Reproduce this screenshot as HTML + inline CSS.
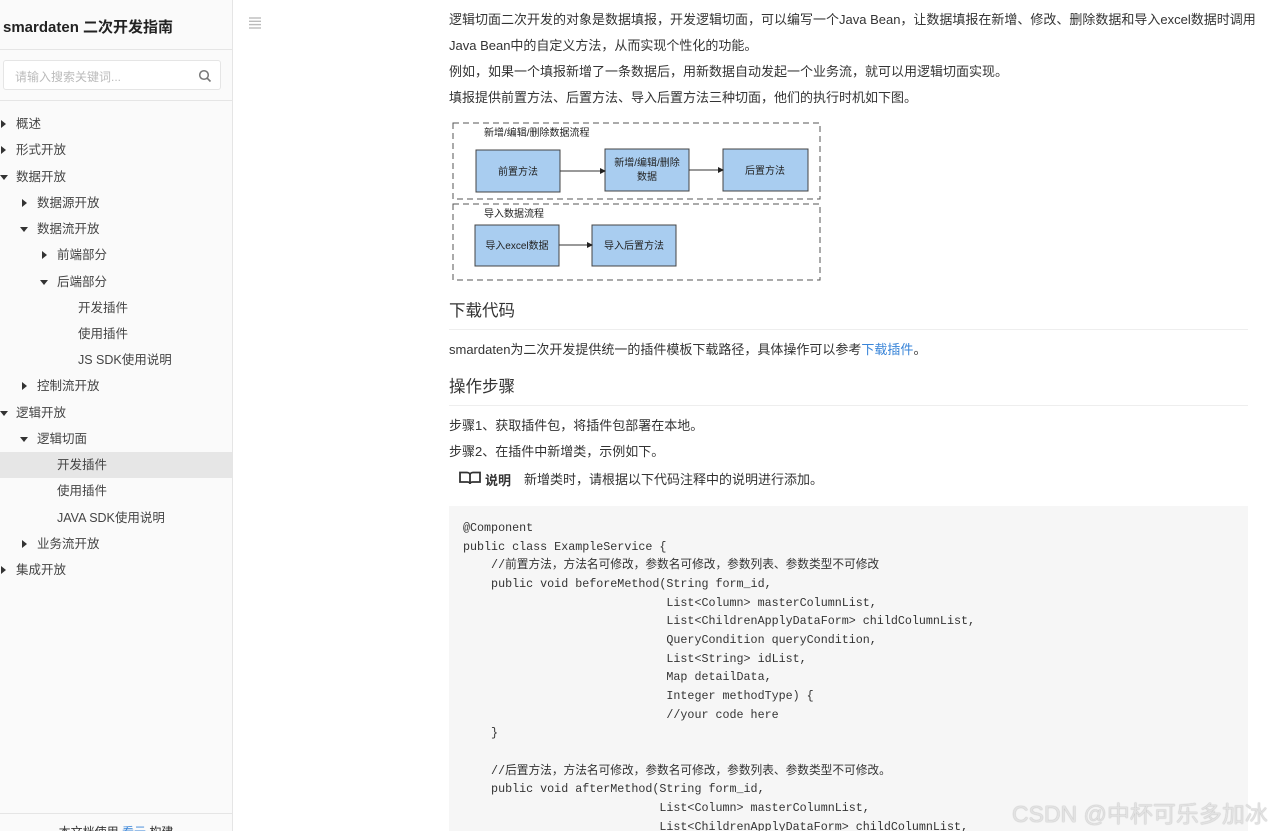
<!DOCTYPE html>
<html><head><meta charset="utf-8"><style>
*{margin:0;padding:0;box-sizing:border-box}
html,body{width:1280px;height:831px;overflow:hidden}
body{background:#fff;font-family:"Liberation Sans","Noto Sans CJK SC",sans-serif;color:#333;position:relative}
.side{position:absolute;left:0;top:0;width:233px;height:831px;background:#fafafa;border-right:1px solid #e5e5e5}
.title{position:absolute;left:3px;top:16px;font-size:15px;font-weight:bold;color:#222}
.hr1{position:absolute;left:0;top:49px;width:232px;border-top:1px solid #e5e5e5}
.search{position:absolute;left:3px;top:60px;width:218px;height:30px;border:1px solid #e5e5e5;border-radius:3px;background:#fff}
.search span{position:absolute;left:11px;top:7px;font-size:12px;color:#bbb}
.search svg{position:absolute;right:8px;top:8px}
.hr2{position:absolute;left:0;top:100px;width:232px;border-top:1px solid #e5e5e5}
.nav div{position:absolute;height:26px;line-height:26px;font-size:12.5px;color:#444;left:0;width:232px}
.nav .act{background:#e6e6e6}
.tri{position:absolute;top:10px;width:0;height:0}
.tr{border-top:4px solid transparent;border-bottom:4px solid transparent;border-left:5px solid #333;top:9px}
.td{border-left:4px solid transparent;border-right:4px solid transparent;border-top:5px solid #333;top:11px}
.foot{position:absolute;left:0;top:813px;width:232px;border-top:1px solid #e5e5e5;font-size:12px;text-align:center;padding-top:9px;color:#333}
.menu{position:absolute;left:249px;top:17px}
.c{position:absolute;left:449px;font-size:13px;color:#333;white-space:nowrap}
h2{position:absolute;left:449px;width:799px;font-size:16.5px;font-weight:normal;color:#333;border-bottom:1px solid #eee;padding-bottom:8px}
a{color:#3884d8;text-decoration:none}
.code{position:absolute;left:449px;top:506px;width:799px;height:325px;background:#f6f6f6}
pre{position:absolute;left:463px;top:519px;font-family:"Liberation Mono","Noto Sans CJK SC",monospace;font-size:11.7px;line-height:18.65px;color:#333}
.wm{position:absolute;left:1012px;top:795px;font-size:23px;color:#e2e2e2;text-shadow:0 0 1px #999}
</style></head><body>
<div class="side">
<div class="title">smardaten 二次开发指南</div>
<div class="hr1"></div>
<div class="search"><span>请输入搜索关键词...</span><svg width="14" height="14" viewBox="0 0 14 14"><circle cx="6" cy="6" r="4.3" fill="none" stroke="#777" stroke-width="1.5"/><line x1="9.2" y1="9.2" x2="12.5" y2="12.5" stroke="#777" stroke-width="1.6"/></svg></div>
<div class="hr2"></div>
<div class="nav">
<div style="top:111px"><i class="tri tr" style="left:1px"></i><span style="margin-left:16px">概述</span></div>
<div style="top:137px"><i class="tri tr" style="left:1px"></i><span style="margin-left:16px">形式开放</span></div>
<div style="top:164px"><i class="tri td" style="left:0"></i><span style="margin-left:16px">数据开放</span></div>
<div style="top:190px"><i class="tri tr" style="left:22px"></i><span style="margin-left:37px">数据源开放</span></div>
<div style="top:216px"><i class="tri td" style="left:20px"></i><span style="margin-left:37px">数据流开放</span></div>
<div style="top:242px"><i class="tri tr" style="left:42px"></i><span style="margin-left:57px">前端部分</span></div>
<div style="top:269px"><i class="tri td" style="left:40px"></i><span style="margin-left:57px">后端部分</span></div>
<div style="top:295px"><span style="margin-left:78px">开发插件</span></div>
<div style="top:321px"><span style="margin-left:78px">使用插件</span></div>
<div style="top:347px"><span style="margin-left:78px">JS SDK使用说明</span></div>
<div style="top:373px"><i class="tri tr" style="left:22px"></i><span style="margin-left:37px">控制流开放</span></div>
<div style="top:400px"><i class="tri td" style="left:0"></i><span style="margin-left:16px">逻辑开放</span></div>
<div style="top:426px"><i class="tri td" style="left:20px"></i><span style="margin-left:37px">逻辑切面</span></div>
<div class="act" style="top:452px"><span style="margin-left:57px">开发插件</span></div>
<div style="top:478px"><span style="margin-left:57px">使用插件</span></div>
<div style="top:505px"><span style="margin-left:57px">JAVA SDK使用说明</span></div>
<div style="top:531px"><i class="tri tr" style="left:22px"></i><span style="margin-left:37px">业务流开放</span></div>
<div style="top:557px"><i class="tri tr" style="left:1px"></i><span style="margin-left:16px">集成开放</span></div>
</div>
<div class="foot">本文档使用 <a>看云</a> 构建</div>
</div>
<svg class="menu" width="12" height="12" viewBox="0 0 12 12"><g stroke="#bbb" stroke-width="1.4"><line x1="0" y1="1" x2="12" y2="1"/><line x1="0" y1="4.3" x2="12" y2="4.3"/><line x1="0" y1="7.6" x2="12" y2="7.6"/><line x1="0" y1="11" x2="12" y2="11"/></g></svg>

<div class="c" style="top:9px">逻辑切面二次开发的对象是数据填报，开发逻辑切面，可以编写一个Java Bean，让数据填报在新增、修改、删除数据和导入excel数据时调用</div>
<div class="c" style="top:35px">Java Bean中的自定义方法，从而实现个性化的功能。</div>
<div class="c" style="top:61px">例如，如果一个填报新增了一条数据后，用新数据自动发起一个业务流，就可以用逻辑切面实现。</div>
<div class="c" style="top:87px">填报提供前置方法、后置方法、导入后置方法三种切面，他们的执行时机如下图。</div>

<svg style="position:absolute;left:450px;top:120px" width="374" height="164" viewBox="0 0 374 164" font-family="Liberation Sans,Noto Sans CJK SC,sans-serif" font-size="10">
<rect x="3" y="3" width="367" height="76" fill="none" stroke="#555" stroke-dasharray="6,4"/>
<rect x="3" y="84" width="367" height="76" fill="none" stroke="#555" stroke-dasharray="6,4"/>
<text x="34" y="16" fill="#222">新增/编辑/删除数据流程</text>
<text x="34" y="97" fill="#222">导入数据流程</text>
<g fill="#a9cdf0" stroke="#444"><rect x="26" y="30" width="84" height="42"/><rect x="155" y="29" width="84" height="42"/><rect x="273" y="29" width="85" height="42"/><rect x="25" y="105" width="84" height="41"/><rect x="142" y="105" width="84" height="41"/></g>
<g stroke="#333"><line x1="110" y1="51" x2="150" y2="51"/><line x1="239" y1="50" x2="268" y2="50"/><line x1="109" y1="125" x2="137" y2="125"/></g>
<g fill="#222"><path d="M150 48l6 3-6 3z"/><path d="M268 47l6 3-6 3z"/><path d="M137 122l6 3-6 3z"/></g>
<g fill="#222" text-anchor="middle"><text x="68" y="55">前置方法</text><text x="197" y="46">新增/编辑/删除</text><text x="197" y="60">数据</text><text x="315" y="54">后置方法</text><text x="67" y="129">导入excel数据</text><text x="184" y="129">导入后置方法</text></g>
</svg>

<h2 style="top:297px">下载代码</h2>
<div class="c" style="top:339px">smardaten为二次开发提供统一的插件模板下载路径，具体操作可以参考<a>下载插件</a>。</div>
<h2 style="top:373px">操作步骤</h2>
<div class="c" style="top:415px">步骤1、获取插件包，将插件包部署在本地。</div>
<div class="c" style="top:441px">步骤2、在插件中新增类，示例如下。</div>
<svg style="position:absolute;left:459px;top:471px" width="22" height="14" viewBox="0 0 22 14"><path d="M1 1.5h7c1.5 0 3 1 3 2.5v9c0-1-1-2-2.5-2H1zM21 1.5h-7c-1.5 0-3 1-3 2.5v9c0-1 1-2 2.5-2H21z" fill="none" stroke="#333" stroke-width="1.8"/></svg>
<div class="c" style="top:470px;left:485px;font-weight:bold;font-size:13px">说明</div>
<div class="c" style="top:469px;left:524px;font-size:13px">新增类时，请根据以下代码注释中的说明进行添加。</div>

<div class="code"></div>
<pre>@Component
public class ExampleService {
    //前置方法，方法名可修改，参数名可修改，参数列表、参数类型不可修改
    public void beforeMethod(String form_id,
                             List&lt;Column&gt; masterColumnList,
                             List&lt;ChildrenApplyDataForm&gt; childColumnList,
                             QueryCondition queryCondition,
                             List&lt;String&gt; idList,
                             Map detailData,
                             Integer methodType) {
                             //your code here
    }

    //后置方法，方法名可修改，参数名可修改，参数列表、参数类型不可修改。
    public void afterMethod(String form_id,
                            List&lt;Column&gt; masterColumnList,
                            List&lt;ChildrenApplyDataForm&gt; childColumnList,
</pre>
<div class="wm">CSDN @中杯可乐多加冰</div>
</body></html>
